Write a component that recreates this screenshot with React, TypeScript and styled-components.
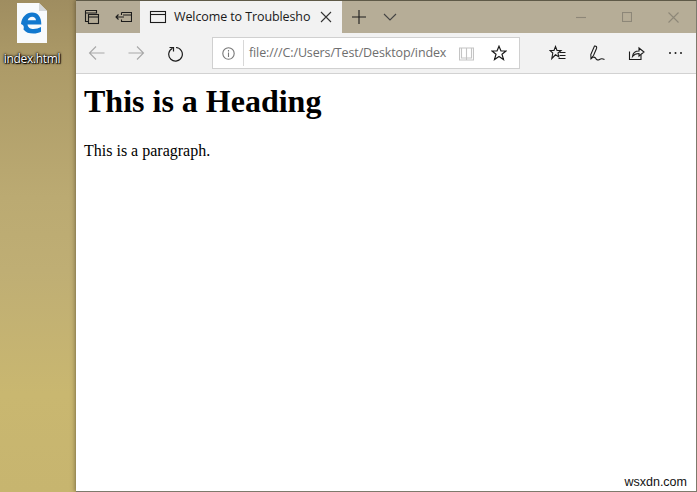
import React from 'react';
import styled, { createGlobalStyle } from 'styled-components';

const GlobalStyle = createGlobalStyle`
  html, body {
    margin: 0;
    padding: 0;
    background: #b09c63;
  }
  * {
    box-sizing: border-box;
  }
`;

const Screen = styled.div`
  display: flex;
  width: 697px;
  height: 492px;
  overflow: hidden;
  background: linear-gradient(180deg, #9f8d60 0%, #ad9b68 14%, #bbaa72 40%, #bfae74 55%, #c9b770 80%, #c7b56f 100%);
`;

const Desktop = styled.aside`
  display: flex;
  flex-direction: column;
  align-items: center;
  width: 76px;
  padding: 2px 12px 0 0;
  flex-shrink: 0;
`;

const FileLabel = styled.span`
  margin-top: 8px;
  font: 12px/14px "Open Sans", "Noto Sans", sans-serif;
  letter-spacing: -0.3px;
  color: #fff;
  white-space: nowrap;
  text-shadow: 0 0 1px #000, 0 0 2px #000, 0 0 3px #000, 1px 1px 1px #000;
`;

const Browser = styled.div`
  display: flex;
  flex-direction: column;
  flex: 1;
  border-top: 1px solid #5f5a48;
  border-right: 1px solid #7d7a6c;
  border-bottom: 1px solid #7d7a6c;
  background: #fff;
  box-shadow: -1px 0 4px rgba(60, 50, 30, 0.5);
`;

const TitleBar = styled.div`
  display: flex;
  align-items: stretch;
  height: 32px;
  flex-shrink: 0;
  background: #b6ad97;
`;

const TabTools = styled.div`
  display: flex;
  align-items: center;
  gap: 15px;
  width: 64px;
  padding-left: 8px;
  background: #b4ab96;
`;

const Tab = styled.div`
  display: flex;
  align-items: center;
  width: 202px;
  padding: 0 10px 0 9px;
  background: #f2f2f2;
`;

const TabTitle = styled.span`
  flex: 1;
  margin-left: 7px;
  font: 12.5px/16px "Open Sans", "Noto Sans", sans-serif;
  letter-spacing: -0.1px;
  color: #1a1a1a;
  white-space: nowrap;
`;

const TabActions = styled.div`
  display: flex;
  align-items: center;
  gap: 16px;
  padding-left: 9px;
`;

const WindowControls = styled.div`
  display: flex;
  align-items: center;
  gap: 36px;
  margin-left: auto;
  padding-right: 17px;
`;

const ToolBar = styled.div`
  display: flex;
  align-items: center;
  height: 41px;
  flex-shrink: 0;
  background: #f2f2f2;
  border-bottom: 1px solid #d2d2d2;
`;

const NavGroup = styled.div`
  display: flex;
  align-items: center;
  gap: 23px;
  width: 136px;
  padding-left: 12px;
`;

const AddressBar = styled.div`
  display: flex;
  align-items: center;
  width: 308px;
  height: 32px;
  padding: 0 10px 0 9px;
  background: #fff;
  border: 1px solid #d0d0d0;
`;

const Divider = styled.span`
  width: 1px;
  height: 26px;
  margin: 0 5px 0 8px;
  background: #d8d8d8;
`;

const Url = styled.span`
  width: 204px;
  font: 12.5px/16px "Open Sans", "Noto Sans", sans-serif;
  letter-spacing: -0.13px;
  color: #6e6e6e;
  white-space: nowrap;
`;

const AddressIcons = styled.div`
  display: flex;
  align-items: center;
  gap: 17px;
  margin-left: 6px;
`;

const HubGroup = styled.div`
  display: flex;
  align-items: center;
  gap: 23px;
  margin-left: 29px;
`;

const Page = styled.main`
  position: relative;
  flex: 1;
  padding: 0 8px;
  color: #000;
  font-family: "Liberation Serif", "Times New Roman", serif;
`;

const Heading = styled.h1`
  margin: 9px 0 0;
  font-size: 32px;
  line-height: 37px;
  font-weight: 700;
`;

const Paragraph = styled.p`
  margin: 22px 0 0;
  font-size: 16px;
  line-height: 18px;
`;

const Watermark = styled.span`
  position: absolute;
  right: 9px;
  bottom: 2px;
  font: 12.5px/14px "Liberation Sans", Arial, sans-serif;
  color: #111;
`;

const Icon: React.FC<{ w?: number; h?: number; color?: string; sw?: number; children: React.ReactNode }> = ({
  w = 18,
  h = 18,
  color = '#1c1c1c',
  sw = 1.1,
  children,
}) => (
  <svg width={w} height={h} viewBox={`0 0 ${w} ${h}`} fill="none" stroke={color} strokeWidth={sw} style={{ flexShrink: 0, display: 'block' }}>
    {children}
  </svg>
);

const FileIcon = () => (
  <svg width="32" height="42" viewBox="0 0 32 42" style={{ display: 'block' }}>
    <path d="M1 1H23L31 9V41H1Z" fill="#f8fafc" />
    <path d="M23 1V9H31Z" fill="#d5d8da" />
    <path
      d="M5 22C5.5 15 10.5 10.5 16 10.5C22 10.5 25.5 15 25.3 22.5H11.5C11.8 25.6 14.5 27 17.5 27C20.2 27 22.8 26.2 25 25V29.8C22.8 31 20.2 31.6 17.5 31.6C13 31.6 9.5 30.4 7.5 27.5C8.2 25 8 23.2 5 22ZM11.7 18.3H20C19.8 16 18.3 14.8 16.2 14.8C14 14.8 12.3 16 11.7 18.3Z"
      fill="#1178cf"
      fillRule="evenodd"
    />
  </svg>
);

export default function App() {
  return (
    <>
      <GlobalStyle />
      <Screen>
        <Desktop>
          <FileIcon />
          <FileLabel>index.html</FileLabel>
        </Desktop>
        <Browser>
          <TitleBar>
            <TabTools>
              <Icon w={16} h={16}>
                <path d="M1.5 1.5H12.5V4.5M1.5 1.5V12.5H4.5M1.5 4H12.5" />
                <rect x="4.5" y="5.5" width="10" height="9" />
                <path d="M4.5 8H14.5" />
              </Icon>
              <Icon w={17} h={16}>
                <path d="M6.5 3.5H16.5V12.5H6.5V10.5M6.5 3.5V6M8 6H16.5" />
                <path d="M1 8H9M3.5 5.5L1 8L3.5 10.5" />
              </Icon>
            </TabTools>
            <Tab>
              <Icon>
                <rect x="1.5" y="3.5" width="15" height="11" />
                <path d="M1.5 6.5H16.5" />
              </Icon>
              <TabTitle>Welcome to Troublesho</TabTitle>
              <Icon w={12} h={12} color="#333">
                <path d="M1 1L11 11M11 1L1 11" />
              </Icon>
            </Tab>
            <TabActions>
              <Icon w={16} h={16}>
                <path d="M8 1V15M1 8H15" />
              </Icon>
              <Icon w={14} h={14} color="#444">
                <path d="M1 4L7 10L13 4" />
              </Icon>
            </TabActions>
            <WindowControls>
              <Icon w={10} h={10} color="#8d8778">
                <path d="M0 5.5H10" />
              </Icon>
              <Icon w={10} h={10} color="#8d8778">
                <rect x="0.5" y="0.5" width="9" height="9" />
              </Icon>
              <Icon w={11} h={11} color="#8d8778">
                <path d="M0.5 0.5L10.5 10.5M10.5 0.5L0.5 10.5" />
              </Icon>
            </WindowControls>
          </TitleBar>
          <ToolBar>
            <NavGroup>
              <Icon w={17} h={16} color="#a8a8a8">
                <path d="M16.5 8H1.5M8 1.5L1.5 8L8 14.5" />
              </Icon>
              <Icon w={17} h={16} color="#a8a8a8">
                <path d="M0.5 8H15.5M9 1.5L15.5 8L9 14.5" />
              </Icon>
              <Icon w={16} h={17} sw={1.2}>
                <path d="M4.5 3.2A6.8 6.8 0 1 0 8 2.5" />
                <path d="M1.5 2.5H5.5V6.5" />
              </Icon>
            </NavGroup>
            <AddressBar>
              <Icon w={13} h={13} color="#777">
                <circle cx="6.5" cy="6.5" r="5.7" />
                <path d="M6.5 5.5V10M6.5 3V4.4" />
              </Icon>
              <Divider />
              <Url>file:///C:/Users/Test/Desktop/index</Url>
              <AddressIcons>
                <Icon w={15} h={15} color="#c4c4c4">
                  <path d="M0.5 2H7.5V14H0.5ZM7.5 2H14.5V14H7.5Z" />
                  <path d="M2.5 2V12H7.5M12.5 2V12H7.5" />
                </Icon>
                <Icon w={16} h={16} sw={1.2}>
                  <path d="M8 1.2L10 6H15L11 9.2L12.5 14.5L8 11.4L3.5 14.5L5 9.2L1 6H6Z" />
                </Icon>
              </AddressIcons>
            </AddressBar>
            <HubGroup>
              <Icon w={17} h={16}>
                <path d="M6.5 1.5L8 5.5H12L9 8L9.8 11.8L6.5 9.8L2.8 13.5L3.8 8L1 5.5H5Z" />
                <path d="M10.5 7.5H16.5M10.5 10.5H16.5M9.5 13.5H16.5" />
              </Icon>
              <Icon w={16} h={17}>
                <path d="M5.5 1C7.5 0.8 8 2 7.5 3.5L4.5 10.5L2 13.5L1.8 9.5Z" />
                <path d="M2 14C3.5 12 5 11.5 6.5 13C7.5 15 9 15.5 10.5 14.5C12 13.5 13.5 13.5 15.5 14.5" />
              </Icon>
              <Icon w={17} h={16}>
                <path d="M1.5 6.5V14.5H13V10" />
                <path d="M4.5 11.5C5 7.5 8 6 11 6V3L16 7L11 11V8.5C8.5 8.5 6 9.5 4.5 11.5Z" />
              </Icon>
              <Icon w={15} h={4} sw={0}>
                <circle cx="2" cy="2" r="1" fill="#1c1c1c" />
                <circle cx="7.5" cy="2" r="1" fill="#1c1c1c" />
                <circle cx="13" cy="2" r="1" fill="#1c1c1c" />
              </Icon>
            </HubGroup>
          </ToolBar>
          <Page>
            <Heading>This is a Heading</Heading>
            <Paragraph>This is a paragraph.</Paragraph>
            <Watermark>wsxdn.com</Watermark>
          </Page>
        </Browser>
      </Screen>
    </>
  );
}
